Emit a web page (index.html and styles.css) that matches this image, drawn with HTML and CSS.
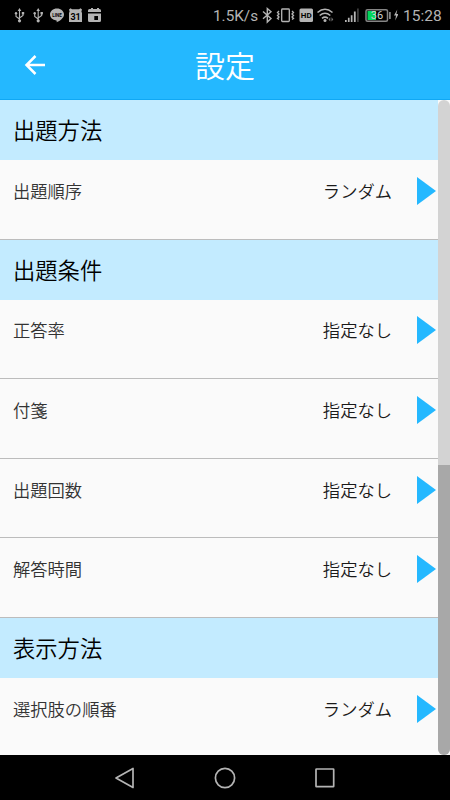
FILE: index.html
```
<!DOCTYPE html>
<html lang="ja">
<head>
	<meta charset="UTF-8">
	<title>設定</title>
	<link rel="stylesheet" href="styles.css">
</head>
<body>
	<div class="phone">
		<div class="status_bar">
			<svg class="notices" width="110" height="30" viewBox="0 0 110 30">
				<!-- usb -->
				<g id="usb" fill="#b4b4b4" stroke="#b4b4b4">
					<path d="M19.500 10v10M16 13.500v3l3.500 2.500M23 13v2.500l-3.500 2.500" fill="none" stroke-width="1.100"/>
					<path d="M17.700 11l1.800-3 1.800 3z" stroke="none"/>
					<circle cx="16" cy="13.200" r="1.200" stroke="none"/>
					<path d="M21.800 12h2.400v2.400h-2.400z" stroke="none"/>
					<circle cx="19.500" cy="20.800" r="1.600" stroke="none"/>
				</g>
				<use href="#usb" x="18.700"/>
				<!-- line -->
				<path d="M57 8.500c-4 0-7 2.700-7 6 0 3 2.600 5.400 6.200 5.900l.6.400-.2 1.500c2.500-1 7.400-4 7.400-7.800 0-3.300-3-6-7-6z" fill="#b4b4b4"/>
				<text x="57" y="16.500" class="line_text">LINE</text>
				<!-- calendar -->
				<path d="M69 9.500l1.500-1.200 1.500.9h7l1.500-.9 1.500 1.200-.6 2 .6 1.500v9H69v-9l.6-1.500z" fill="#b4b4b4"/>
				<text x="75.600" y="19.800" class="day_text">31</text>
				<path d="M89.500 9H91V8h2v1h4V8h2v1h.5q1.500 0 1.500 1.500V12H88v-1.500Q88 9 89.500 9zM88 13.500h13v7q0 1.500-1.500 1.500h-10Q88 22 88 20.500z" fill="#b4b4b4"/>
				<path d="M94.300 16h3.700v4h-3.700z" fill="#000"/>
			</svg>
			<div class="speed">1.5K/s</div>
			<svg class="signals" width="138" height="30" viewBox="260 0 138 30">
				<!-- bluetooth -->
				<path d="M263 11.500l8 7-3.700 3.500V8.500l3.700 3.300-8 7" fill="none" stroke="#b4b4b4" stroke-width="1.400"/>
				<!-- vibrate -->
				<rect x="281.700" y="9" width="7.600" height="12.500" rx=".8" fill="none" stroke="#b4b4b4" stroke-width="1.300"/>
				<path d="M279 11l-1.500 1.500 1.500 1.500-1.500 1.500 1.500 1.500-1.500 1.500 1.500 1M292 11l1.500 1.500-1.500 1.500 1.500 1.500-1.500 1.500 1.500 1.500-1.500 1" fill="none" stroke="#b4b4b4" stroke-width="1.300"/>
				<rect x="299.500" y="8.500" width="13.500" height="13.500" rx="1.500" fill="#b4b4b4"/>
				<text x="306.300" y="18.300" class="hd_text">HD</text>
				<!-- wifi -->
				<path d="M317.500 12.500q7.500-6.500 15 0M319.700 15.500q5.300-4.500 10.600 0M322 18.300q3-2.400 6 0" fill="none" stroke="#b4b4b4" stroke-width="1.600"/>
				<circle cx="325" cy="20.600" r="1.500" fill="#b4b4b4"/>
				<path d="M330.300 17.300v4.200l-1.800-2zM331.500 17.300v4.200l1.800-2z" fill="#777"/>
				<!-- mobile signal -->
				<path d="M345 20h1.700v2H345zM347.900 17.700h1.700V22h-1.700zM350.800 15.300h1.700V22h-1.700zM353.900 11.500h1.800V22h-1.800z" fill="#b4b4b4"/>
				<path d="M357 8.500h1.800V22H357z" fill="#3c3c3c"/>
				<!-- battery -->
				<rect x="366" y="9.700" width="21.500" height="11.500" rx="1.500" fill="none" stroke="#858585" stroke-width="1.500"/>
				<path d="M367.500 11h8.500v9h-8.500z" fill="#00d65b"/>
				<path d="M389 12h1.800v7H389z" fill="#858585"/>
				<text x="377" y="19.400" class="battery_text">36</text>
				<path d="M397.300 9.500l-3.300 6h2l-.8 5 3.300-6.400h-2.100z" fill="#b4b4b4"/>
			</svg>
			<div class="clock">15:28</div>
		</div>
		<div class="header">
			<svg class="back" width="22" height="22" viewBox="0 0 22 22">
				<path d="M21 11H2.500M11.500 2l-9 9 9 9" fill="none" stroke="#fff" stroke-width="2.500"/>
			</svg>
			<h1>設定</h1>
		</div>
		<div class="content">
			<div class="list">
				<h2>出題方法</h2>
				<div class="row">
					<span>出題順序</span>
					<span class="value">ランダム</span>
					<i class="arrow"></i>
				</div>
				<h2>出題条件</h2>
				<div class="row">
					<span>正答率</span>
					<span class="value">指定なし</span>
					<i class="arrow"></i>
				</div>
				<div class="row">
					<span>付箋</span>
					<span class="value">指定なし</span>
					<i class="arrow"></i>
				</div>
				<div class="row">
					<span>出題回数</span>
					<span class="value">指定なし</span>
					<i class="arrow"></i>
				</div>
				<div class="row">
					<span>解答時間</span>
					<span class="value">指定なし</span>
					<i class="arrow"></i>
				</div>
				<h2>表示方法</h2>
				<div class="row last">
					<span>選択肢の順番</span>
					<span class="value">ランダム</span>
					<i class="arrow"></i>
				</div>
			</div>
			<div class="scroll_bar">
				<div class="thumb"></div>
			</div>
		</div>
		<div class="nav_bar">
			<svg width="22" height="22" viewBox="0 0 22 22">
				<path d="M19 1.500v19L2 11z"/>
			</svg>
			<svg width="22" height="22" viewBox="0 0 22 22">
				<circle cx="11" cy="11" r="9.600"/>
			</svg>
			<svg width="22" height="22" viewBox="0 0 22 22">
				<rect x="2" y="2" width="17.700" height="17.700" rx=".5"/>
			</svg>
		</div>
	</div>
</body>
</html>
```
FILE: styles.css
```
*{
	margin: 0;
	padding: 0;
	box-sizing: border-box;
}
body{
	background-color: #000;
	font-family: "Noto Sans CJK JP", sans-serif;
	font-weight: 350;
}
.phone{
	display: flex;
	flex-direction: column;
	width: 450px;
	height: 800px;
	overflow: hidden;
}
.status_bar{
	display: flex;
	align-items: center;
	height: 30px;
	color: #b4b4b4;
	background-color: #000;
	font-family: Roboto, sans-serif;
	font-weight: 400;
}
.status_bar svg{
	flex: none;
}
.speed{
	width: 47px;
	margin-left: 103px;
	font-size: 15.300px;
	line-height: 30px;
	white-space: nowrap;
}
.speed,
.clock{
	padding-top: 1px;
}
.clock{
	margin-left: 5px;
	font-size: 15.500px;
	line-height: 30px;
	white-space: nowrap;
}
.line_text,
.day_text,
.hd_text{
	font-family: Roboto, sans-serif;
	font-weight: 700;
	text-anchor: middle;
}
.line_text{
	font-size: 4.500px;
}
.day_text{
	font-size: 9px;
}
.hd_text{
	font-size: 8px;
}
.battery_text{
	font-size: 11px;
	text-anchor: middle;
	fill: #d0d0d0;
}
.header{
	display: grid;
	grid-template-columns: 50px 1fr 50px;
	align-items: center;
	height: 70px;
	color: #fff;
	background-color: #24b8ff;
	border-bottom: 1px solid #10a8f4;
}
.back{
	justify-self: end;
	margin-right: 4px;
}
h1{
	font-size: 30px;
	font-weight: 350;
	line-height: 69px;
	text-align: center;
}
.content{
	display: flex;
	height: 655px;
	background-color: #fafafa;
}
.list{
	width: 438px;
}
h2{
	height: 60px;
	padding-left: 13px;
	color: #000;
	background-color: #c3ebff;
	font-size: 22.300px;
	font-weight: 350;
	line-height: 58px;
}
.row{
	display: flex;
	align-items: center;
	height: 79.600px;
	padding: 0 1px 17px 13px;
	border-bottom: 1px solid #bcbcbc;
	color: #333;
	font-size: 17.300px;
	line-height: 26px;
}
.row.last{
	border-bottom: 0;
}
.value{
	margin-left: auto;
	color: #1a1a1a;
}
.arrow{
	margin-left: 25px;
	border-left: 19.500px solid #24b8ff;
	border-right: .5px solid transparent;
	border-top: 14px solid transparent;
	border-bottom: 14px solid transparent;
}
.scroll_bar{
	width: 12px;
	height: 655px;
	padding-top: 365px;
	border-radius: 6px;
	background-color: #d3d3d3;
}
.thumb{
	height: 290px;
	border-radius: 0 0 6px 6px;
	background-color: #a8a8a8;
}
.nav_bar{
	display: flex;
	justify-content: center;
	align-items: center;
	gap: 78px;
	height: 45px;
	background-color: #000;
}
.nav_bar svg{
	fill: none;
	stroke: #b4b4b4;
	stroke-width: 1.700;
	stroke-linejoin: round;
}
```
